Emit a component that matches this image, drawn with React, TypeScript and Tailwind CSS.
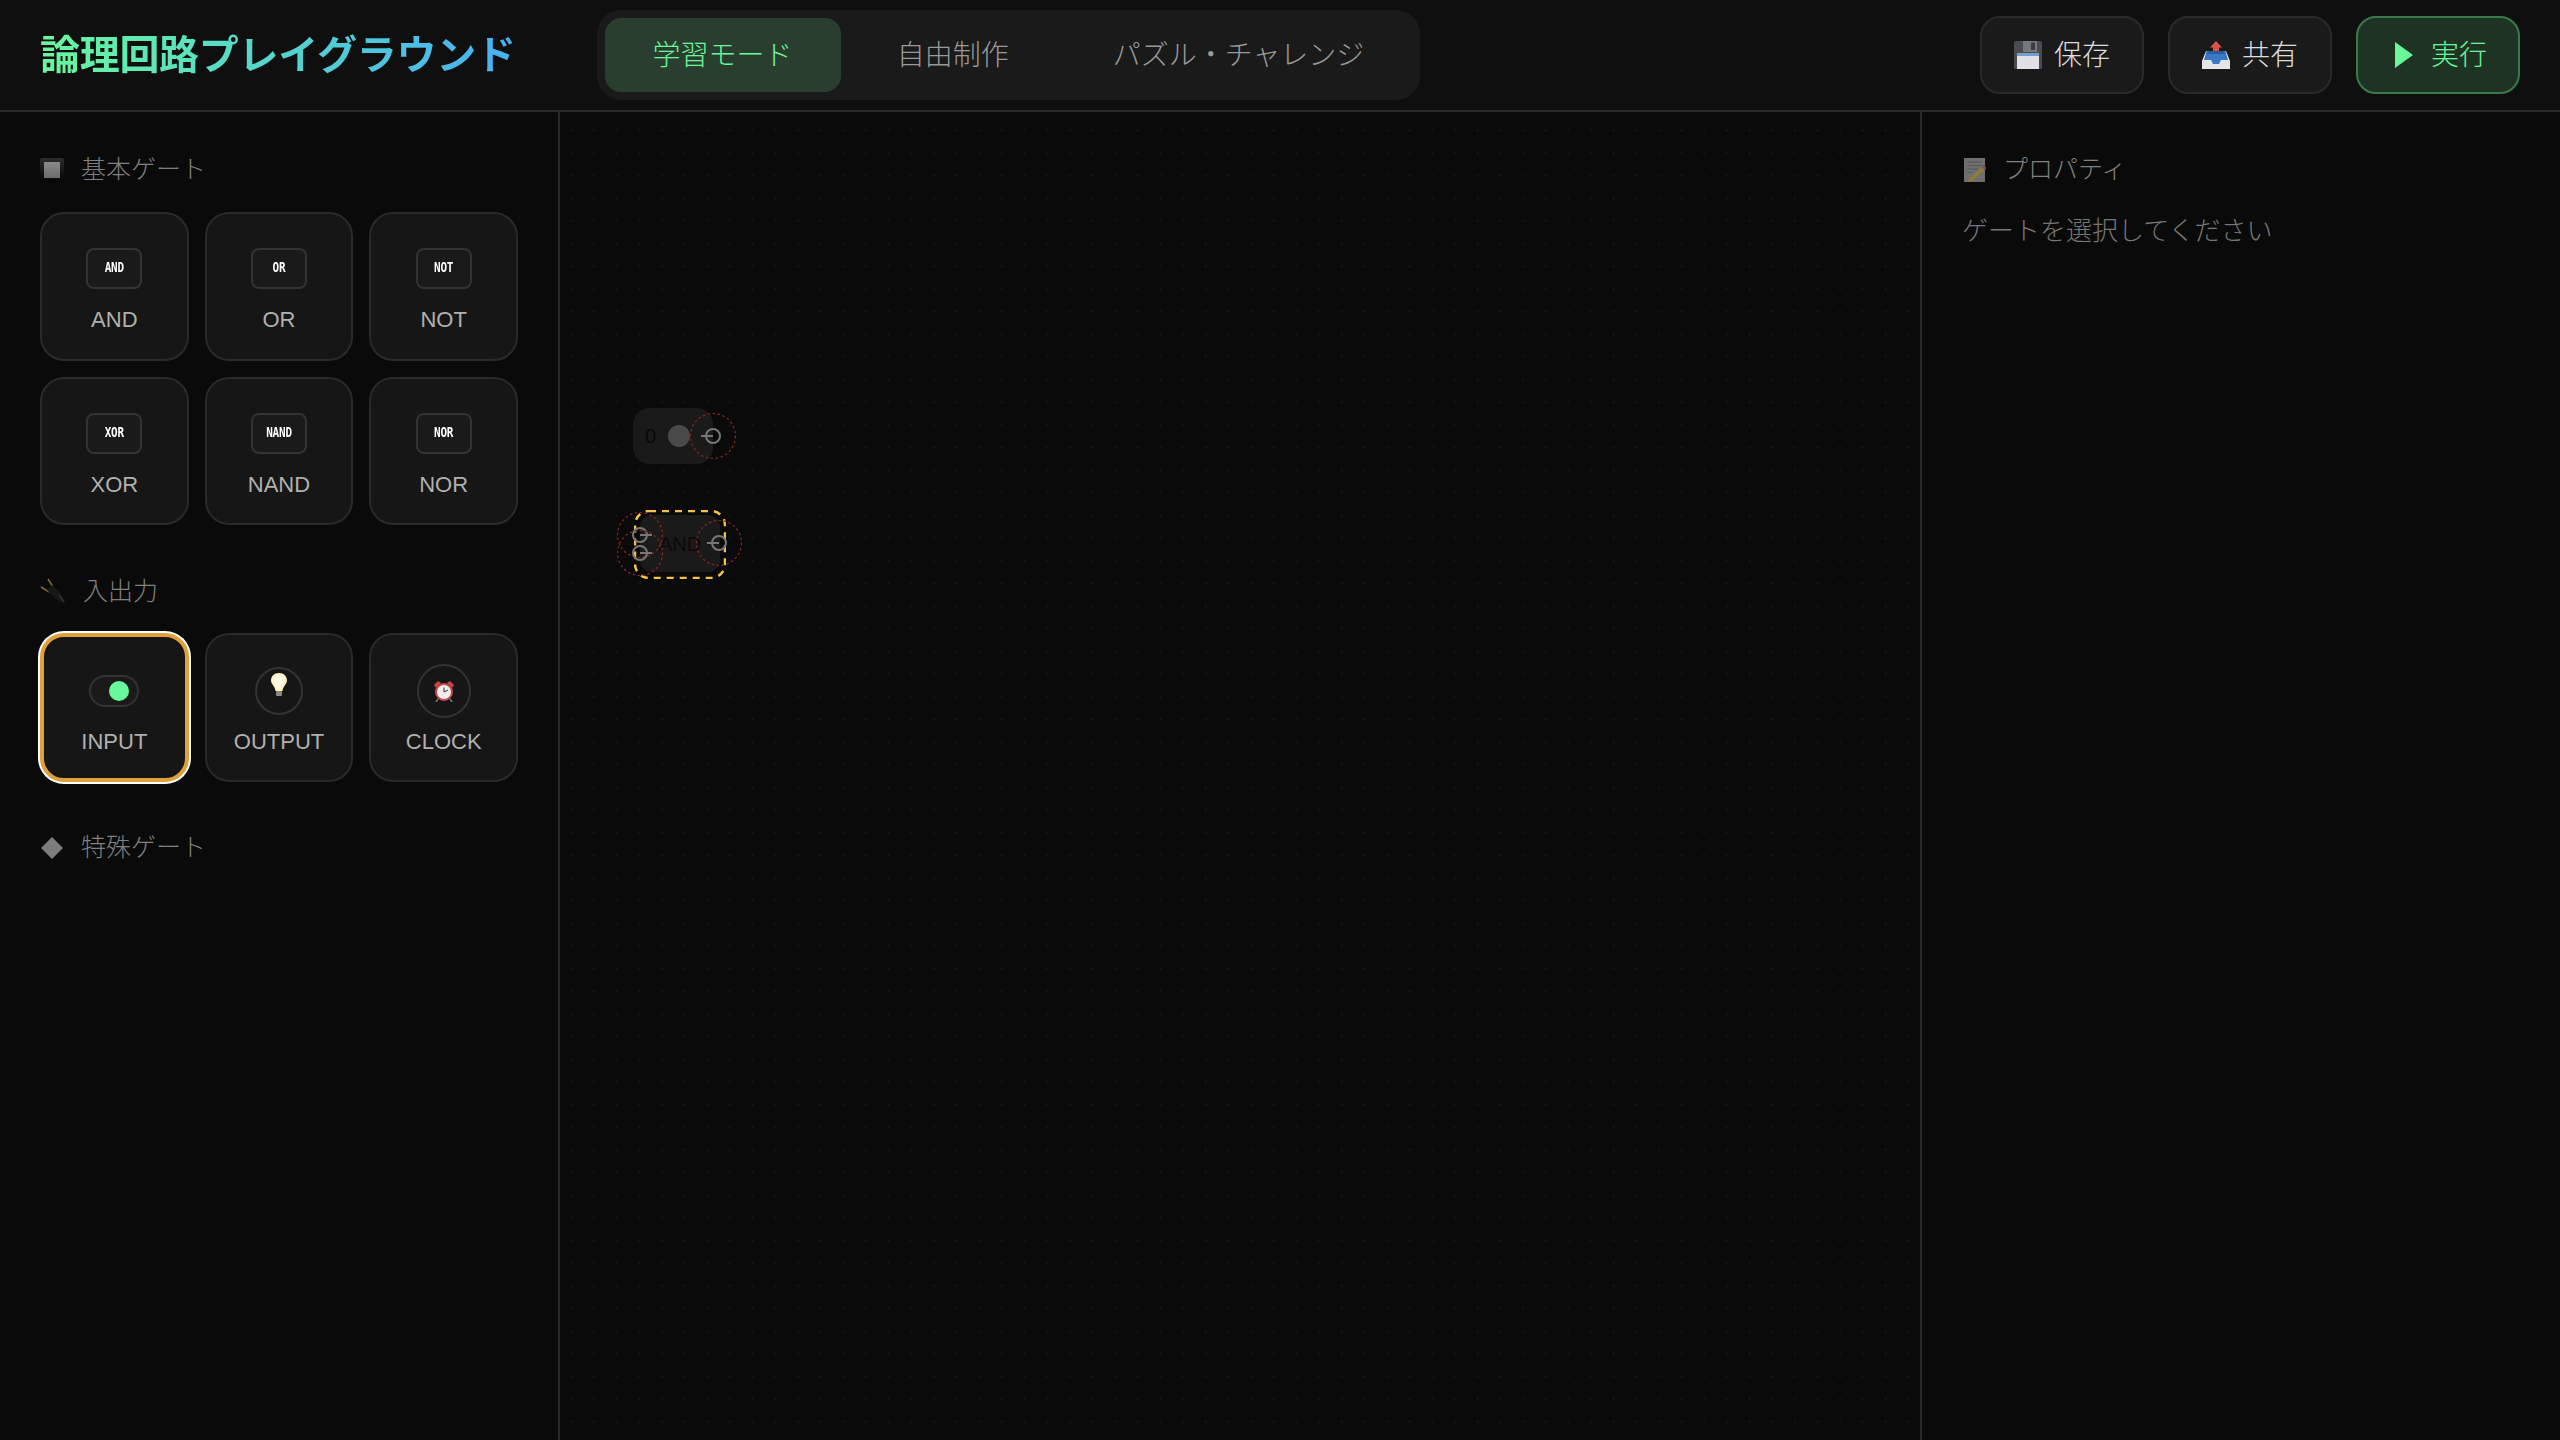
import React from 'react';

const FloppyIcon = () => (
    <svg width="28" height="28" viewBox="0 0 28 28" className="shrink-0">
        <rect x="0" y="0" width="28" height="28" rx="1.5" fill="#4b4c50" />
        <rect x="9" y="0" width="14" height="11" fill="#77787c" />
        <rect x="17" y="1.5" width="4" height="7.5" fill="#3a3b3e" />
        <rect x="3" y="12.5" width="22" height="15.5" fill="#dfe1e6" />
        <rect x="3" y="12.5" width="22" height="2.5" fill="#6f9fd8" />
    </svg>
);

const OutboxIcon = () => (
    <svg width="28" height="28" viewBox="0 0 28 28" className="shrink-0">
        <path d="M14 0 L20 6.5 H17 V12 H11 V6.5 H8 Z" fill="#d9534a" />
        <path d="M4 10 H24 L28 20 V28 H0 V20 Z" fill="#e4e5e8" />
        <path d="M4.5 10 H23.5 L26 19 H19 L17 23 H11 L9 19 H2 Z" fill="#3b78c4" />
        <path d="M6 10 H22 L23 13 H5 Z" fill="#2a5d9f" />
    </svg>
);

const SquareIcon = () => (
    <div className="w-6 h-6 shrink-0 rounded-[2px] bg-gradient-to-b from-[#2c2c2c] to-[#050505] flex items-center justify-center">
        <div className="w-4 h-4 bg-gradient-to-b from-[#8a8a8a] to-[#6c6c6c]"></div>
    </div>
);

const PlugIcon = () => (
    <svg width="26" height="26" viewBox="0 0 26 26" className="shrink-0">
        <path d="M1 9 L9 14 M8 1 L13 9" stroke="#7b6a32" strokeWidth="1.6" fill="none" />
        <path d="M7 12 L12 7 L21 15 L24 22 L25 25 L21 24 L15 21 Z" fill="#171717" />
        <path d="M19 17 L24 24" stroke="#3a3a3a" strokeWidth="1.2" />
    </svg>
);

const DiamondIcon = () => (
    <svg width="24" height="24" viewBox="0 0 24 24" className="shrink-0">
        <path d="M12 1 L23 12 L12 23 L1 12 Z" fill="#7c7c7c" />
    </svg>
);

const MemoIcon = () => (
    <svg width="24" height="24" viewBox="0 0 24 24" className="shrink-0">
        <rect x="2" y="0" width="21" height="24" fill="#6f6f6f" />
        <path d="M5 4 H20 M5 7.5 H20 M5 11 H16 M5 14.5 H11" stroke="#585858" strokeWidth="1" />
        <path d="M7 21 L20 9 L23 12 L10 23 L6 24 Z" fill="#8f7a3a" />
        <path d="M20 9 L22 7 L24.5 10 L23 12 Z" fill="#7c5050" />
    </svg>
);

const BulbIcon = () => (
    <svg width="18" height="24" viewBox="0 0 18 24">
        <path d="M9 0 C14 0 17 3.5 17 7.5 C17 11 13 13 12.5 18 H5.5 C5 13 1 11 1 7.5 C1 3.5 4 0 9 0 Z" fill="#fff3c0" />
        <path d="M9 2 C12 2 14 4.5 14 7.5 C14 10 11 12 10.5 16 H7.5 C7 12 4 10 4 7.5 C4 4.5 6 2 9 2 Z" fill="#fffbe6" />
        <rect x="6" y="18" width="6" height="5" rx="1" fill="#8a8a80" />
    </svg>
);

const ClockIcon = () => (
    <svg width="22" height="22" viewBox="0 0 22 22">
        <path d="M1 5 L5 1 L8 3 L3 8 Z M21 5 L17 1 L14 3 L19 8 Z" fill="#c9474a" />
        <path d="M5 19 L3 22 M17 19 L19 22" stroke="#777" strokeWidth="1.5" />
        <circle cx="11" cy="12" r="9" fill="#c9474a" />
        <circle cx="11" cy="12" r="7" fill="#eeeeee" />
        <path d="M11 7.5 V12 L15 10" stroke="#333" strokeWidth="1" fill="none" />
    </svg>
);

// port on the canvas: dashed red hit area, grey ring, and a short lead
const Port = ({ x, y, lead }: { x: number; y: number; lead: 'left' | 'right' }) => (
    <svg width="48" height="48" viewBox="0 0 48 48" className="absolute" style={{ left: x - 24, top: y - 24 }}>
        <circle cx="24" cy="24" r="22.5" fill="none" stroke="#8a2626" strokeWidth="1.2" strokeDasharray="2.5 2.5" />
        <circle cx="24" cy="24" r="7" fill="none" stroke="#777777" strokeWidth="2" />
        {lead === 'left' ? (
            <path d="M12 24 H24" stroke="#777777" strokeWidth="2" />
        ) : (
            <path d="M24 24 H36" stroke="#777777" strokeWidth="2" />
        )}
    </svg>
);

const GateCard = ({ name }: { name: string }) => (
    <div className="aspect-square bg-[#161616] border-2 border-[#2a2a2a] rounded-3xl flex flex-col items-center pt-5">
        <div className="h-[72px] flex items-center justify-center">
            <div className="w-14 h-[41px] mb-[3px] bg-[#1a1a1a] border-2 border-[#333333] rounded-lg flex items-center justify-center">
                <span className="font-['DejaVu_Sans_Mono',monospace] font-bold text-[11px] tracking-[-0.2px] text-white scale-y-[1.2]">{name}</span>
            </div>
        </div>
        <span className="text-[22px] mt-[1px] leading-[26px] text-[#b0b0b0]">{name}</span>
    </div>
);

const IoCard = ({ name, selected, children }: { name: string; selected?: boolean; children: React.ReactNode }) => (
    <div
        className={
            selected
                ? "aspect-square bg-[#161616] border-4 border-[#e0a03a] ring-2 ring-white rounded-3xl flex flex-col items-center pt-[18px]"
                : "aspect-square bg-[#161616] border-2 border-[#2a2a2a] rounded-3xl flex flex-col items-center pt-5"
        }
    >
        <div className="h-[72px] flex items-center justify-center">{children}</div>
        <span className="text-[22px] mt-[2px] leading-[26px] text-[#b0b0b0]">{name}</span>
    </div>
);

const SectionTitle = ({ icon, label, className }: { icon: React.ReactNode; label: string; className?: string }) => (
    <div className={"flex items-center gap-[17px] h-9 mb-6 text-[25px] text-[#808080] " + (className || '')}>
        {icon}
        <span>{label}</span>
    </div>
);

const App = () => {
    return (
        <div className="h-screen w-screen overflow-hidden flex flex-col bg-[#0a0a0a] font-light font-['Liberation_Sans','Noto_Sans_CJK_JP',sans-serif]">
            {/* Header */}
            <header className="h-[112px] shrink-0 bg-[#0f0f0f] border-b-2 border-[#2a2a2a] pl-10 pr-10 flex items-center justify-between">
                <div className="flex items-center gap-[81px]">
                    <h1 className="text-[40px] font-bold tracking-[-0.3px] leading-[60px] bg-gradient-to-r from-[#69f79b] to-[#4aaef2] bg-clip-text text-transparent">
                        論理回路プレイグラウンド
                    </h1>
                    <div className="flex gap-2 p-2 bg-[#1a1a1a] rounded-3xl">
                        <button className="px-12 pt-[17px] pb-[15px] rounded-2xl bg-[#2a3e2f] text-[#69f79b] text-[28px] leading-[42px]">学習モード</button>
                        <button className="px-12 pt-[17px] pb-[15px] rounded-2xl text-[#999999] text-[28px] leading-[42px]">自由制作</button>
                        <button className="px-12 pt-[17px] pb-[15px] rounded-2xl text-[#999999] text-[28px] leading-[42px]">パズル・チャレンジ</button>
                    </div>
                </div>
                <div className="flex items-center gap-6">
                    <button className="h-[78px] w-[164px] flex items-center justify-center gap-3 bg-[#1a1a1a] border-2 border-[#2a2a2a] rounded-[20px] text-[#dddddd] text-[28px]">
                        <FloppyIcon />
                        <span className="pt-[2px]">保存</span>
                    </button>
                    <button className="h-[78px] w-[164px] flex items-center justify-center gap-3 bg-[#1a1a1a] border-2 border-[#2a2a2a] rounded-[20px] text-[#dddddd] text-[28px]">
                        <OutboxIcon />
                        <span className="pt-[2px]">共有</span>
                    </button>
                    <button className="h-[78px] w-[164px] flex items-center justify-center gap-[18px] pl-[6px] bg-[#1f3325] border-2 border-[#3a7a4a] rounded-[20px] text-[#69f79b] text-[28px]">
                        <svg width="18" height="26" viewBox="0 0 18 26"><path d="M0 0 L18 13 L0 26 Z" fill="#69f79b" /></svg>
                        <span className="pt-[2px]">実行</span>
                    </button>
                </div>
            </header>

            <div className="flex-1 flex min-h-0">
                {/* Left palette */}
                <aside className="w-[560px] shrink-0 border-r-2 border-[#2a2a2a] p-10">
                    <SectionTitle icon={<SquareIcon />} label="基本ゲート" />
                    <div className="grid grid-cols-3 gap-4">
                        {['AND', 'OR', 'NOT', 'XOR', 'NAND', 'NOR'].map(name => (
                            <GateCard key={name} name={name} />
                        ))}
                    </div>

                    <SectionTitle icon={<PlugIcon />} label="入出力" className="mt-12" />
                    <div className="grid grid-cols-3 gap-4">
                        <IoCard name="INPUT" selected>
                            <div className="w-[50px] h-8 bg-[#1a1a1a] border-2 border-[#333333] rounded-full flex items-center justify-end pr-2">
                                <div className="w-5 h-5 rounded-full bg-[#69f79b]"></div>
                            </div>
                        </IoCard>
                        <IoCard name="OUTPUT">
                            <div className="w-12 h-12 border-2 border-[#333333] rounded-full flex justify-center pt-[4px]">
                                <BulbIcon />
                            </div>
                        </IoCard>
                        <IoCard name="CLOCK">
                            <div className="w-[54px] h-[54px] border-2 border-[#333333] rounded-full flex items-center justify-center">
                                <ClockIcon />
                            </div>
                        </IoCard>
                    </div>

                    <SectionTitle icon={<DiamondIcon />} label="特殊ゲート" className="mt-12" />
                </aside>

                {/* Canvas */}
                <main className="relative flex-1 overflow-hidden bg-[#0a0a0a] bg-[radial-gradient(circle,#141414_1px,transparent_1px)] bg-[length:22.67px_22.67px] bg-[position:0px_7px]">
                    <div className="absolute left-[73px] top-[296px] w-20 h-14 bg-[#1a1a1a] rounded-2xl flex items-center pl-3">
                        <span className="text-xl text-[#0a0a0a] w-[23px]">0</span>
                        <div className="w-[22px] h-[22px] rounded-full bg-[#4a4a4a]"></div>
                    </div>
                    <Port x={153} y={324} lead="left" />

                    <div className="absolute left-[80px] top-[403px] w-20 h-[57px] bg-[#1a1a1a] rounded-xl flex items-center justify-center">
                        <span className="text-xl text-[#0a0a0a]">AND</span>
                    </div>
                    <svg width="92" height="69" viewBox="0 0 92 69" className="absolute left-[74px] top-[398px]">
                        <rect x="1" y="1" width="90" height="67" rx="14" fill="none" stroke="#f7c24a" strokeWidth="2.5" strokeDasharray="7 6" />
                    </svg>
                    <Port x={80} y={423} lead="right" />
                    <Port x={80} y={441} lead="right" />
                    <Port x={159} y={431} lead="left" />
                </main>

                {/* Right properties */}
                <aside className="w-[640px] shrink-0 border-l-2 border-[#2a2a2a] p-10">
                    <SectionTitle icon={<MemoIcon />} label="プロパティ" />
                    <p className="text-[26px] leading-[39px] text-[#777777]">ゲートを選択してください</p>
                </aside>
            </div>
        </div>
    );
};

export default App;
